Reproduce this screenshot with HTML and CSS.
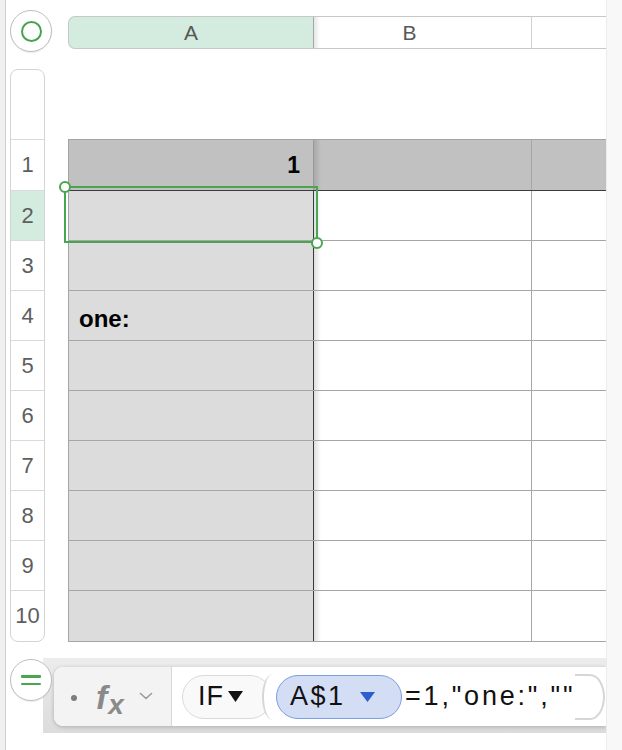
FILE: index.html
```html
<!DOCTYPE html>
<html>
<head>
<meta charset="utf-8">
<link rel="stylesheet" href="styles.css">
</head>
<body>
<div class="app">
  <div class="edge"></div>
  <div class="main">
    <div class="top">
      <div class="round-btn"><span class="ring"></span></div>
      <div class="col-headers">
        <div class="ch ch-a">A</div>
        <div class="ch ch-b">B</div>
        <div class="ch ch-c"></div>
      </div>
    </div>
    <div class="sheet">
      <div class="row-headers">
        <div class="rh rh-corner"></div>
        <div class="rh rh-first">1</div>
        <div class="rh rh-sel">2</div>
        <div class="rh">3</div>
        <div class="rh">4</div>
        <div class="rh">5</div>
        <div class="rh">6</div>
        <div class="rh">7</div>
        <div class="rh">8</div>
        <div class="rh">9</div>
        <div class="rh">10</div>
      </div>
      <div class="table">
        <div class="row head-row"><div class="cell a num">1</div><div class="cell b"></div><div class="cell c"></div></div>
        <div class="row"><div class="cell a"></div><div class="cell b"></div><div class="cell c"></div></div>
        <div class="row"><div class="cell a"></div><div class="cell b"></div><div class="cell c"></div></div>
        <div class="row"><div class="cell a txt">one:</div><div class="cell b"></div><div class="cell c"></div></div>
        <div class="row"><div class="cell a"></div><div class="cell b"></div><div class="cell c"></div></div>
        <div class="row"><div class="cell a"></div><div class="cell b"></div><div class="cell c"></div></div>
        <div class="row"><div class="cell a"></div><div class="cell b"></div><div class="cell c"></div></div>
        <div class="row"><div class="cell a"></div><div class="cell b"></div><div class="cell c"></div></div>
        <div class="row"><div class="cell a"></div><div class="cell b"></div><div class="cell c"></div></div>
        <div class="row last"><div class="cell a"></div><div class="cell b"></div><div class="cell c"></div></div>
        <div class="selection"><span class="handle h-tl"></span><span class="handle h-br"></span></div>
      </div>
    </div>
    <div class="formula">
      <div class="round-btn eq"><span class="eq-line"></span><span class="eq-line"></span></div>
      <div class="bar">
        <div class="panel">
          <div class="fx-area">
            <span class="dot"></span>
            <span class="fx"><span class="fx-f">f</span><span class="fx-x">x</span></span>
            <svg class="chev" width="14" height="8" viewBox="0 0 14 8"><polyline points="1.5,1.5 7,6.5 12.5,1.5" fill="none" stroke="#9a9a9a" stroke-width="1.6" stroke-linecap="round" stroke-linejoin="round"/></svg>
          </div>
          <div class="tokens">
            <span class="tok-fn">IF<svg class="tri" width="15" height="11" viewBox="0 0 15 11"><polygon points="0,0 15,0 7.5,11" fill="#111111"/></svg></span>
            <span class="paren-open"></span>
            <span class="tok-ref">A$1<svg class="tri tri-blue" width="15" height="10" viewBox="0 0 15 10"><polygon points="0,0 15,0 7.5,10" fill="#2d5ccf"/></svg></span>
            <span class="ftext">=1,"one:",""</span>
            <span class="paren-close"></span>
          </div>
        </div>
      </div>
    </div>
  </div>
  <div class="right-strip"></div>
</div>
</body>
</html>
```
FILE: styles.css
```css
* { box-sizing: border-box; }
html, body { margin: 0; padding: 0; }
body {
  width: 622px;
  height: 750px;
  overflow: hidden;
  background: #ffffff;
  font-family: "Liberation Sans", Arial, sans-serif;
}
.app {
  display: flex;
  height: 750px;
}
.edge {
  width: 6px;
  background: #f0f0f0;
  border-right: 1px solid #cdcdcd;
  flex: none;
}
.right-strip {
  width: 16px;
  flex: none;
  background: #f8f8f8;
  border-left: 1px solid #ebebeb;
}
.main {
  width: 600px;
  flex: none;
  overflow: hidden;
  padding-top: 10px;
}

/* round buttons */
.round-btn {
  width: 42px;
  height: 42px;
  flex: none;
  border-radius: 50%;
  border: 1px solid #bfbfbf;
  background: #ffffff;
  box-shadow: 0 1px 1px rgba(0,0,0,0.08);
  margin-left: 4px;
  display: flex;
  align-items: center;
  justify-content: center;
}
.ring {
  width: 21px;
  height: 21px;
  border-radius: 50%;
  border: 2.3px solid #45a24e;
}

/* top column headers */
.top {
  display: flex;
  align-items: flex-start;
  height: 42px;
}
.col-headers {
  display: flex;
  margin-left: 16px;
  margin-top: 6px;
  height: 33px;
  width: 560px;
  flex: none;
}
.ch {
  height: 33px;
  border-top: 1px solid #c8c8c8;
  border-bottom: 1px solid #c8c8c8;
  display: flex;
  align-items: center;
  justify-content: center;
  font-size: 21px;
  color: #585858;
}
.ch-a {
  width: 246px;
  background: #d3ecdf;
  border-left: 1px solid #c8c8c8;
  border-right: 1px solid #a8a8a8;
  border-radius: 7px 0 0 7px;
}
.ch-b {
  width: 218px;
  background-color: #ffffff;
  background-image: linear-gradient(to right, rgba(0,0,0,0.10), rgba(0,0,0,0) 6px);
  border-right: 1px solid #d0d0d0;
  padding-right: 26px;
}
.ch-c {
  width: 96px;
  background: #ffffff;
}

/* sheet */
.sheet {
  display: flex;
  align-items: flex-start;
  margin-top: 17px;
}
.row-headers {
  width: 35px;
  margin-left: 4px;
  flex: none;
  border: 1px solid #d4d4d4;
  border-radius: 8px;
  overflow: hidden;
  background: #ffffff;
}
.rh {
  height: 50px;
  border-bottom: 1px solid #dadada;
  display: flex;
  align-items: center;
  justify-content: center;
  font-size: 22px;
  color: #5e5e5e;
}
.rh-corner { height: 70px; }
.rh-first { height: 51px; }
.rh-sel { background: #d3ecdf; }
.rh:last-child { border-bottom: 0; height: 50px; }

.table {
  position: relative;
  width: 560px;
  flex: none;
  margin-left: 23px;
  margin-top: 70px;
  border-top: 1px solid #a4a4a4;
  border-left: 1px solid #a4a4a4;
}
.row {
  display: flex;
  height: 50px;
  border-bottom: 1px solid #a6a6a6;
}
.row.last { height: 51px; }
.head-row {
  height: 51px;
  background: #c0c1c0;
  border-bottom: 1px solid #3c3c3c;
}
.cell {
  height: 100%;
  display: flex;
  align-items: center;
}
.cell.a {
  width: 245px;
  background: #dcdcdc;
  border-right: 1px solid #3a3a3a;
}
.head-row .cell.a {
  background: #c0c1c0;
  border-right: 1px solid #9a9a9a;
}
.cell.b {
  width: 218px;
  border-right: 1px solid #a6a6a6;
  background-image: linear-gradient(to right, rgba(0,0,0,0.13), rgba(0,0,0,0) 7px);
}
.cell.c { flex: 1; }
.num {
  justify-content: flex-end;
  padding-right: 13px;
  font-weight: bold;
  font-size: 23px;
  color: #000000;
}
.txt {
  padding-left: 10px;
  padding-top: 6px;
  font-weight: bold;
  font-size: 24px;
  color: #000000;
}

/* selection overlay */
.selection {
  position: absolute;
  left: -5px;
  top: 46px;
  width: 254px;
  height: 57px;
  border: 2px solid #4aa552;
}
.handle {
  position: absolute;
  width: 12px;
  height: 12px;
  border-radius: 50%;
  border: 2px solid #4aa552;
  background: #ffffff;
  transform: translate(-50%, -50%);
}
.h-tl { left: -1px; top: -1px; }
.h-br { left: 251px; top: 55px; }

/* formula bar */
.formula {
  display: flex;
  align-items: flex-start;
  margin-top: 16px;
}
.round-btn.eq {
  position: relative;
  z-index: 2;
  margin-top: 1px;
  flex-direction: column;
  gap: 5px;
}
.eq-line {
  width: 20px;
  height: 2.4px;
  background: #47a64f;
  border-radius: 1px;
}
.bar {
  margin-left: -9px;
  width: 563px;
  height: 75px;
  flex: none;
  background: linear-gradient(#ececec, #dcdcdc);
  padding: 9px 0 0 11px;
}
.panel {
  display: flex;
  height: 59px;
  border-radius: 9px 0 0 9px;
  background: #ffffff;
  box-shadow: 0 1px 4px rgba(0,0,0,0.22);
  overflow: hidden;
}
.fx-area {
  width: 118px;
  flex: none;
  background: #f3f3f3;
  border-right: 1px solid #d8d8d8;
  display: flex;
  align-items: center;
  padding-left: 17px;
}
.dot {
  width: 6px;
  height: 6px;
  border-radius: 50%;
  background: #7c7c7c;
  margin-top: 3px;
}
.fx {
  margin-left: 19px;
  color: #8a8a8a;
  font-style: italic;
  font-weight: bold;
  display: flex;
  align-items: baseline;
  line-height: 1;
}
.fx-f { font-size: 34px; }
.fx-x { font-size: 28px; position: relative; top: 5px; margin-left: 1px; }
.chev { margin-left: 15px; margin-top: -2px; }

.tokens {
  flex: 1;
  display: flex;
  align-items: center;
  padding-left: 10px;
  font-size: 27px;
  color: #111111;
  white-space: nowrap;
}
.tok-fn {
  height: 44px;
  width: 90px;
  flex: none;
  display: flex;
  align-items: center;
  padding-left: 15px;
  border: 1.5px solid #d9d9d9;
  border-radius: 22px;
  background: #f9f9f9;
  letter-spacing: 1px;
}
.tri {
  margin-left: 4px;
  flex: none;
}
.tri-blue {
  margin-left: 14px;
}
.paren-open {
  width: 22px;
  height: 46px;
  flex: none;
  margin-left: -10px;
  background: #ffffff;
  border-left: 2px solid #d6d6d6;
  border-radius: 50% 0 0 50% / 50% 0 0 50%;
}
.tok-ref {
  height: 44px;
  width: 126px;
  flex: none;
  margin-left: -8px;
  display: flex;
  align-items: center;
  padding-left: 13px;
  background: #d3ddf3;
  border: 1.5px solid #7c9ee3;
  border-radius: 22px;
  letter-spacing: 2.5px;
}
.ftext {
  margin-left: 3px;
  letter-spacing: 2.8px;
}
.paren-close {
  width: 30px;
  height: 46px;
  flex: none;
  margin-left: 0;
  border: 2px solid #d6d6d6;
  border-left: 0;
  border-radius: 0 50% 50% 0 / 0 50% 50% 0;
}
```
